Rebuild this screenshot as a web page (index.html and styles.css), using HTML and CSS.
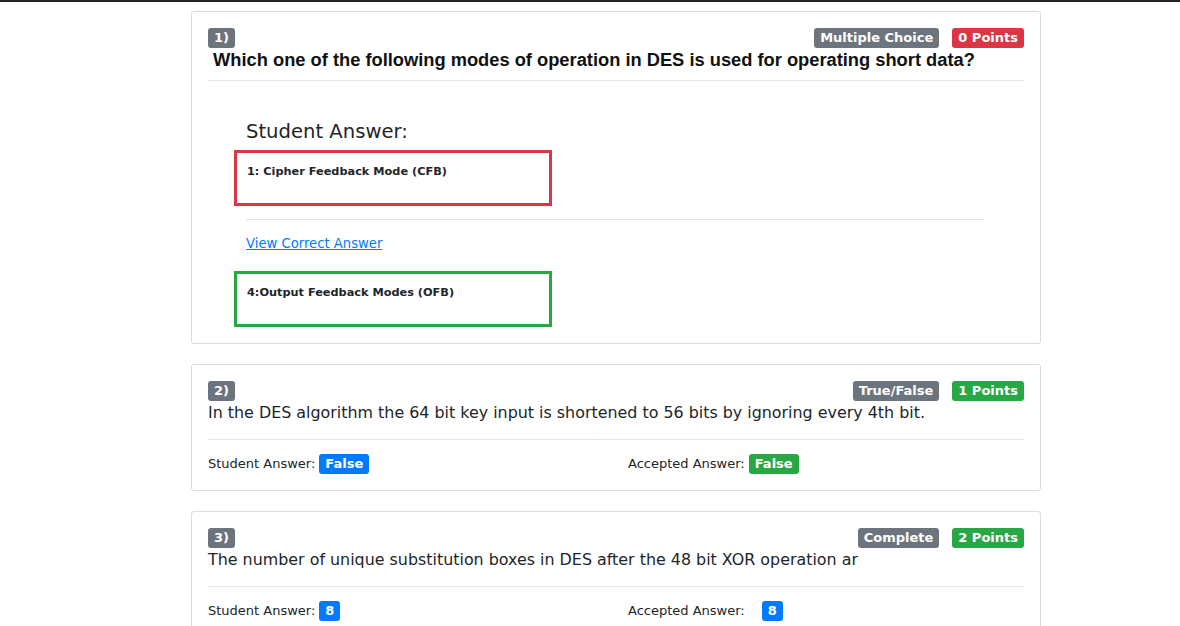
FILE: index.html
```html
<!DOCTYPE html>
<html>
<head>
<meta charset="utf-8">
<link rel="stylesheet" href="styles.css">
</head>
<body>
<div class="topbar"></div>
<main class="page">
  <section class="card card-mc">
    <div class="head">
      <span class="badge grey">1)</span>
      <div class="tags">
        <span class="badge grey">Multiple Choice</span>
        <span class="badge red">0 Points</span>
      </div>
    </div>
    <p class="q q-bold">&nbsp;Which one of the following modes of operation in DES is used for operating short data?</p>
    <hr class="sep">
    <div class="mc">
      <h4 class="mc-title">Student Answer:</h4>
      <div class="choice wrong">1: Cipher Feedback Mode (CFB)</div>
      <hr class="sep inner">
      <a class="link" href="#">View Correct Answer</a>
      <div class="choice right">4:Output Feedback Modes (OFB)</div>
    </div>
  </section>

  <section class="card">
    <div class="head">
      <span class="badge grey">2)</span>
      <div class="tags">
        <span class="badge grey">True/False</span>
        <span class="badge green">1 Points</span>
      </div>
    </div>
    <p class="q plain">In the DES algorithm the 64 bit key input is shortened to 56 bits by ignoring every 4th bit.</p>
    <hr class="sep">
    <div class="answers">
      <div class="ans">Student Answer: <span class="badge blue">False</span></div>
      <div class="ans">Accepted Answer: <span class="badge green">False</span></div>
    </div>
  </section>

  <section class="card">
    <div class="head">
      <span class="badge grey">3)</span>
      <div class="tags">
        <span class="badge grey">Complete</span>
        <span class="badge green">2 Points</span>
      </div>
    </div>
    <p class="q plain">The number of unique substitution boxes in DES after the 48 bit XOR operation ar</p>
    <hr class="sep">
    <div class="answers">
      <div class="ans">Student Answer: <span class="badge blue">8</span></div>
      <div class="ans">Accepted Answer: <span class="gap"></span><span class="badge blue">8</span></div>
    </div>
  </section>
</main>
</body>
</html>
```
FILE: styles.css
```css
* { box-sizing: border-box; }
html, body { margin: 0; padding: 0; background: #fff; }
body {
  font-family: "DejaVu Sans", sans-serif;
  color: #212529;
  overflow: hidden;
}
.topbar { height: 2px; background: #222; }
.page {
  width: 850px;
  margin: 9px 0 0 191px;
  display: flex;
  flex-direction: column;
  gap: 20px;
}
.card {
  border: 1px solid #dcdcdc;
  border-radius: 3px;
  padding: 16px 16px 16px 16px;
}
.head {
  display: flex;
  justify-content: space-between;
  align-items: flex-start;
}
.tags { display: flex; gap: 13px; }
.badge {
  display: inline-block;
  font-weight: 700;
  font-size: 13px;
  line-height: 20px;
  height: 20px;
  padding: 0 6px;
  border-radius: 3px;
  color: #fff;
}
.grey { background: #6c757d; }
.red { background: #dc3545; }
.green { background: #28a745; }
.blue { background: #007bff; }
.q {
  margin: 1px 0 0;
  font-size: 15.9px;
  line-height: 22px;
}
.q-bold {
  font-family: "Liberation Sans", Arial, sans-serif;
  font-weight: 700;
  font-size: 18.3px;
  color: #111;
}
.sep {
  border: 0;
  border-top: 1px solid #e6e6e6;
  margin: 9px 0 0;
}
.q.plain + .sep { margin-top: 15px; }
.mc { padding: 30px 39px 0 26px; }
.mc-title {
  margin: 10px 0 0 12px;
  font-weight: 400;
  font-size: 19.6px;
  line-height: 22px;
}
.choice {
  margin-top: 7px;
  width: 318px;
  height: 56px;
  padding: 10px 10px;
  font-size: 11.3px;
  font-weight: 700;
  line-height: 18px;
}
.wrong { border: 3px solid #dc3545; }
.right { border: 3px solid #28a745; }
.inner { margin: 13px 0 0 12px; }
.link {
  display: block;
  margin: 15px 0 0 12px;
  font-size: 13.2px;
  color: #007bff;
  text-decoration: underline;
  line-height: 17px;
}
.choice.right { margin-top: 19px; }
.answers {
  display: grid;
  grid-template-columns: 420px 1fr;
  margin-top: 14px;
}
.ans {
  font-size: 13px;
  line-height: 20px;
  display: flex;
  align-items: center;
  gap: 4px;
}
.gap { width: 9px; }
```
